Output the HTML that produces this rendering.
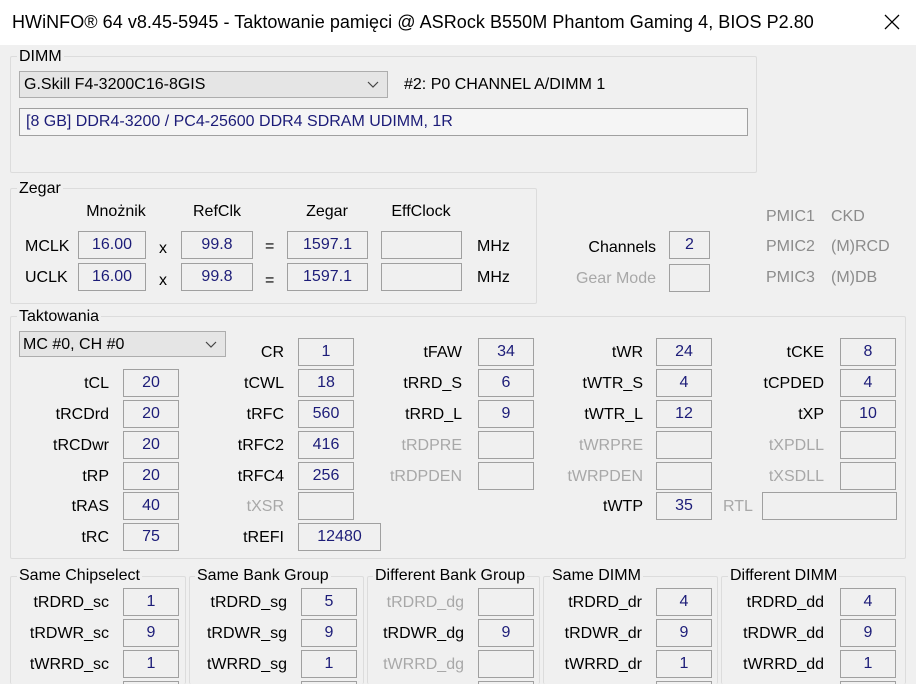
<!DOCTYPE html>
<html style="overflow:hidden"><head><meta charset="utf-8"><style>
html,body{overflow:hidden;height:684px}
body{margin:0;width:916px;height:684px;overflow:hidden;background:#f0f0f0;font-family:"Liberation Sans",sans-serif;font-size:15px;color:#000;position:relative}
div{position:absolute;box-sizing:border-box}
.tb{left:0;top:0;width:916px;height:45px;background:#fff}
.g{border:1px solid #dcdcdc;border-radius:2px}
.gl{background:#f0f0f0;padding:0 2px;line-height:18px}
.b{width:56px;height:28px;border:1px solid #a0a0a0;background:#f0f0f0;color:#1c1c78;text-align:center;line-height:25px;font-size:16px}
.t{width:120px;height:28px;text-align:right;line-height:30px;font-size:16px}
.d{color:#a8a8a8}
.p{color:#8c8c8c;font-size:16px}
</style></head><body>
<div class="tb"><div style="left:12px;top:12px;font-size:18px;white-space:nowrap;letter-spacing:0.05px">HWiNFO® 64 v8.45-5945 - Taktowanie pamięci @ ASRock B550M Phantom Gaming 4, BIOS P2.80</div>
<svg style="position:absolute;left:884px;top:14px" width="16" height="16"><path d="M1 1L15 15M15 1L1 15" stroke="#000" stroke-width="1.3"/></svg></div>

<div class="g" style="left:10px;top:56px;width:747px;height:117px"></div>
<div class="gl" style="left:17px;top:48px;font-size:16px">DIMM</div>
<div style="left:19px;top:71px;width:369px;height:27px;border:1px solid #adadad;background:#e5e5e5;font-size:16px;line-height:26px;padding-left:4px">G.Skill F4-3200C16-8GIS
<svg style="position:absolute;left:347px;top:9px" width="12" height="8"><path d="M1 1L6 6L11 1" stroke="#444" fill="none" stroke-width="1.2"/></svg></div>
<div style="left:404px;top:76px;font-size:16px">#2: P0 CHANNEL A/DIMM 1</div>
<div style="left:19px;top:108px;width:729px;height:28px;border:1px solid #a0a0a0;background:#f5f5f5;color:#1c1c78;font-size:16px;line-height:26px;padding-left:6px">[8 GB] DDR4-3200 / PC4-25600 DDR4 SDRAM UDIMM, 1R</div>

<div class="g" style="left:10px;top:188px;width:527px;height:116px"></div>
<div class="gl" style="left:17px;top:180px;font-size:16px">Zegar</div>
<div style="left:66px;top:203px;width:100px;text-align:center;font-size:16px">Mnożnik</div>
<div style="left:167px;top:203px;width:100px;text-align:center;font-size:16px">RefClk</div>
<div style="left:277px;top:203px;width:100px;text-align:center;font-size:16px">Zegar</div>
<div style="left:371px;top:203px;width:100px;text-align:center;font-size:16px">EffClock</div>
<div style="left:25px;top:238px;font-size:16px">MCLK</div>
<div style="left:25px;top:269px;font-size:16px">UCLK</div>
<div class="b" style="left:78px;top:231px;width:68px">16.00</div>
<div class="b" style="left:78px;top:263px;width:68px">16.00</div>
<div style="left:159px;top:240px;font-size:16px">x</div><div style="left:159px;top:272px;font-size:16px">x</div>
<div class="b" style="left:181px;top:231px;width:72px">99.8</div>
<div class="b" style="left:181px;top:263px;width:72px">99.8</div>
<div style="left:265px;top:238px;font-size:16px">=</div><div style="left:265px;top:272px;font-size:16px">=</div>
<div class="b" style="left:287px;top:231px;width:81px">1597.1</div>
<div class="b" style="left:287px;top:263px;width:81px">1597.1</div>
<div class="b" style="left:381px;top:231px;width:81px"></div>
<div class="b" style="left:381px;top:263px;width:81px"></div>
<div style="left:477px;top:238px;font-size:16px">MHz</div><div style="left:477px;top:269px;font-size:16px">MHz</div>
<div class="t" style="left:536px;top:233px">Channels</div>
<div class="b" style="left:669px;top:231px;width:41px">2</div>
<div class="t d" style="left:536px;top:264px">Gear Mode</div>
<div class="b" style="left:669px;top:264px;width:41px"></div>
<div class="p" style="left:766px;top:208px">PMIC1</div><div class="p" style="left:831px;top:208px">CKD</div>
<div class="p" style="left:766px;top:238px">PMIC2</div><div class="p" style="left:831px;top:238px">(M)RCD</div>
<div class="p" style="left:766px;top:269px">PMIC3</div><div class="p" style="left:831px;top:269px">(M)DB</div>

<div class="g" style="left:10px;top:316px;width:896px;height:243px"></div>
<div class="gl" style="left:17px;top:308px;font-size:16px">Taktowania</div>
<div style="left:19px;top:331px;width:207px;height:26px;border:1px solid #adadad;background:#e5e5e5;font-size:16px;line-height:25px;padding-left:3px">MC #0, CH #0
<svg style="position:absolute;left:185px;top:9px" width="12" height="8"><path d="M1 1L6 6L11 1" stroke="#444" fill="none" stroke-width="1.2"/></svg></div>

<div class="t" style="left:-11px;top:369px">tCL</div><div class="b" style="left:123px;top:369px">20</div>
<div class="t" style="left:-11px;top:400px">tRCDrd</div><div class="b" style="left:123px;top:400px">20</div>
<div class="t" style="left:-11px;top:431px">tRCDwr</div><div class="b" style="left:123px;top:431px">20</div>
<div class="t" style="left:-11px;top:462px">tRP</div><div class="b" style="left:123px;top:462px">20</div>
<div class="t" style="left:-11px;top:492px">tRAS</div><div class="b" style="left:123px;top:492px">40</div>
<div class="t" style="left:-11px;top:523px">tRC</div><div class="b" style="left:123px;top:523px">75</div>

<div class="t" style="left:164px;top:338px">CR</div><div class="b" style="left:298px;top:338px">1</div>
<div class="t" style="left:164px;top:369px">tCWL</div><div class="b" style="left:298px;top:369px">18</div>
<div class="t" style="left:164px;top:400px">tRFC</div><div class="b" style="left:298px;top:400px">560</div>
<div class="t" style="left:164px;top:431px">tRFC2</div><div class="b" style="left:298px;top:431px">416</div>
<div class="t" style="left:164px;top:462px">tRFC4</div><div class="b" style="left:298px;top:462px">256</div>
<div class="t d" style="left:164px;top:492px">tXSR</div><div class="b" style="left:298px;top:492px"></div>
<div class="t" style="left:164px;top:523px">tREFI</div><div class="b" style="left:298px;top:523px;width:83px">12480</div>

<div class="t" style="left:342px;top:338px">tFAW</div><div class="b" style="left:478px;top:338px">34</div>
<div class="t" style="left:342px;top:369px">tRRD_S</div><div class="b" style="left:478px;top:369px">6</div>
<div class="t" style="left:342px;top:400px">tRRD_L</div><div class="b" style="left:478px;top:400px">9</div>
<div class="t d" style="left:342px;top:431px">tRDPRE</div><div class="b" style="left:478px;top:431px"></div>
<div class="t d" style="left:342px;top:462px">tRDPDEN</div><div class="b" style="left:478px;top:462px"></div>

<div class="t" style="left:523px;top:338px">tWR</div><div class="b" style="left:656px;top:338px">24</div>
<div class="t" style="left:523px;top:369px">tWTR_S</div><div class="b" style="left:656px;top:369px">4</div>
<div class="t" style="left:523px;top:400px">tWTR_L</div><div class="b" style="left:656px;top:400px">12</div>
<div class="t d" style="left:523px;top:431px">tWRPRE</div><div class="b" style="left:656px;top:431px"></div>
<div class="t d" style="left:523px;top:462px">tWRPDEN</div><div class="b" style="left:656px;top:462px"></div>
<div class="t" style="left:523px;top:492px">tWTP</div><div class="b" style="left:656px;top:492px">35</div>
<div class="d" style="left:723px;top:498px;font-size:16px">RTL</div><div class="b" style="left:762px;top:492px;width:135px"></div>

<div class="t" style="left:704px;top:338px">tCKE</div><div class="b" style="left:840px;top:338px">8</div>
<div class="t" style="left:704px;top:369px">tCPDED</div><div class="b" style="left:840px;top:369px">4</div>
<div class="t" style="left:704px;top:400px">tXP</div><div class="b" style="left:840px;top:400px">10</div>
<div class="t d" style="left:704px;top:431px">tXPDLL</div><div class="b" style="left:840px;top:431px"></div>
<div class="t d" style="left:704px;top:462px">tXSDLL</div><div class="b" style="left:840px;top:462px"></div>

<div class="g" style="left:10px;top:576px;width:176px;height:108px;border-bottom:none"></div>
<div class="g" style="left:189px;top:576px;width:175px;height:108px;border-bottom:none"></div>
<div class="g" style="left:367px;top:576px;width:173px;height:108px;border-bottom:none"></div>
<div class="g" style="left:543px;top:576px;width:175px;height:108px;border-bottom:none"></div>
<div class="g" style="left:721px;top:576px;width:185px;height:108px;border-bottom:none"></div>
<div class="gl" style="left:17px;top:567px;font-size:16px">Same Chipselect</div>
<div class="gl" style="left:195px;top:567px;font-size:16px">Same Bank Group</div>
<div class="gl" style="left:373px;top:567px;font-size:16px">Different Bank Group</div>
<div class="gl" style="left:550px;top:567px;font-size:16px">Same DIMM</div>
<div class="gl" style="left:728px;top:567px;font-size:16px">Different DIMM</div>

<div class="t" style="left:-11px;top:588px">tRDRD_sc</div><div class="b" style="left:123px;top:588px">1</div>
<div class="t" style="left:-11px;top:619px">tRDWR_sc</div><div class="b" style="left:123px;top:619px">9</div>
<div class="t" style="left:-11px;top:650px">tWRRD_sc</div><div class="b" style="left:123px;top:650px">1</div>
<div class="b" style="left:123px;top:681px;height:3px;border-bottom:none"></div>

<div class="t" style="left:167px;top:588px">tRDRD_sg</div><div class="b" style="left:301px;top:588px">5</div>
<div class="t" style="left:167px;top:619px">tRDWR_sg</div><div class="b" style="left:301px;top:619px">9</div>
<div class="t" style="left:167px;top:650px">tWRRD_sg</div><div class="b" style="left:301px;top:650px">1</div>
<div class="b" style="left:301px;top:681px;height:3px;border-bottom:none"></div>

<div class="t d" style="left:344px;top:588px">tRDRD_dg</div><div class="b" style="left:478px;top:588px"></div>
<div class="t" style="left:344px;top:619px">tRDWR_dg</div><div class="b" style="left:478px;top:619px">9</div>
<div class="t d" style="left:344px;top:650px">tWRRD_dg</div><div class="b" style="left:478px;top:650px"></div>
<div class="b" style="left:478px;top:681px;height:3px;border-bottom:none"></div>

<div class="t" style="left:522px;top:588px">tRDRD_dr</div><div class="b" style="left:656px;top:588px">4</div>
<div class="t" style="left:522px;top:619px">tRDWR_dr</div><div class="b" style="left:656px;top:619px">9</div>
<div class="t" style="left:522px;top:650px">tWRRD_dr</div><div class="b" style="left:656px;top:650px">1</div>
<div class="b" style="left:656px;top:681px;height:3px;border-bottom:none"></div>

<div class="t" style="left:704px;top:588px">tRDRD_dd</div><div class="b" style="left:840px;top:588px">4</div>
<div class="t" style="left:704px;top:619px">tRDWR_dd</div><div class="b" style="left:840px;top:619px">9</div>
<div class="t" style="left:704px;top:650px">tWRRD_dd</div><div class="b" style="left:840px;top:650px">1</div>
<div class="b" style="left:840px;top:681px;height:3px;border-bottom:none"></div>
</body></html>
